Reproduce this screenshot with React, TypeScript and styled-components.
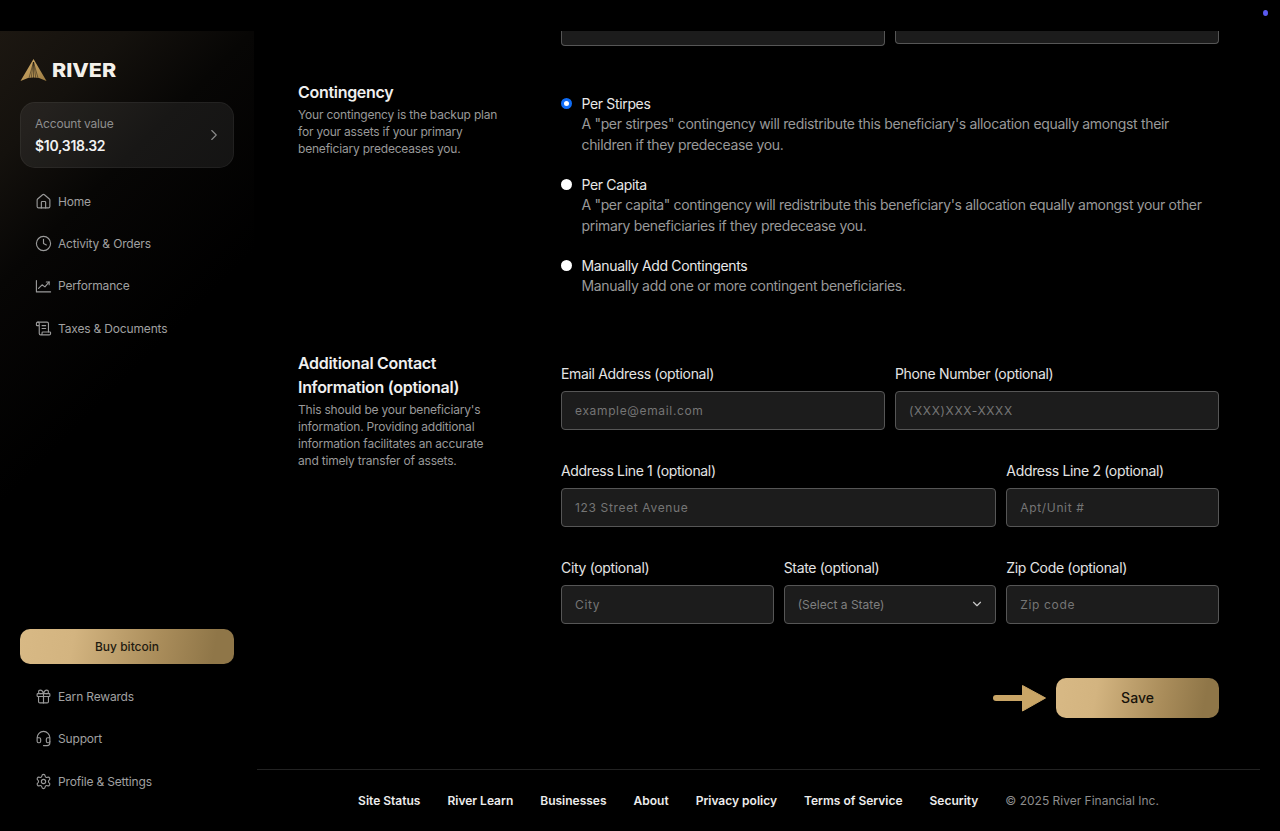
import { createGlobalStyle, styled } from 'styled-components';
import {
  ChevronDown,
  ChevronRight,
  Clock,
  Gift,
  Headset,
  House,
  ScrollText,
  Settings
} from 'lucide-react';

const GlobalStyle = createGlobalStyle`
  html, body {
    margin: 0;
    padding: 0;
    background: #000;
    font-family: Inter, 'Liberation Sans', sans-serif;
    -webkit-font-smoothing: antialiased;
  }
  * { box-sizing: border-box; }
`;

const PerformanceIcon = () => (
  <svg width='17' height='17' viewBox='0 0 24 24' fill='none' stroke='currentColor' strokeWidth='2' strokeLinecap='round' strokeLinejoin='round'>
    <path d='M2 5v16h20' />
    <path d='M5 16l5-5 4 3 6-7' />
    <path d='M16 7h4v4' />
  </svg>
);

const Logo = () => (
  <svg width='27' height='23' viewBox='0 0 27 23' fill='none'>
    <defs>
      <linearGradient id='logoGold' x1='0' y1='0' x2='1' y2='1'>
        <stop offset='0' stopColor='#d6b06c' />
        <stop offset='1' stopColor='#9c7c42' />
      </linearGradient>
    </defs>
    <path d='M13.5 0L26.5 22L19 19Q13.5 18 8 19L0.5 22Z' fill='url(#logoGold)' />
    <path d='M13.5 3V19M13.5 3L11.2 19M13.5 3L15.8 19M13.5 3L9 19M13.5 3L18 19' stroke='#1a1610' strokeWidth='0.5' />
  </svg>
);

const ArrowMark = () => (
  <svg width='53' height='28' viewBox='0 0 53 28' fill='none'>
    <path d='M3 14H30' stroke='#c9a566' strokeWidth='6' strokeLinecap='round' />
    <path d='M29.5 1.5L52.5 14L29.5 27Z' fill='#c9a566' stroke='#c9a566' strokeWidth='1' strokeLinejoin='round' />
  </svg>
);

const topNav = [
  { label: 'Home', icon: <House size={17} /> },
  { label: 'Activity & Orders', icon: <Clock size={17} /> },
  { label: 'Performance', icon: <PerformanceIcon /> },
  { label: 'Taxes & Documents', icon: <ScrollText size={17} /> }
];

const bottomNav = [
  { label: 'Earn Rewards', icon: <Gift size={17} /> },
  { label: 'Support', icon: <Headset size={17} /> },
  { label: 'Profile & Settings', icon: <Settings size={17} /> }
];

const contingencies = [
  {
    title: 'Per Stirpes',
    text: 'A "per stirpes" contingency will redistribute this beneficiary\'s allocation equally amongst their children if they predecease you.',
    checked: true
  },
  {
    title: 'Per Capita',
    text: 'A "per capita" contingency will redistribute this beneficiary\'s allocation equally amongst your other primary beneficiaries if they predecease you.',
    checked: false
  },
  {
    title: 'Manually Add Contingents',
    text: 'Manually add one or more contingent beneficiaries.',
    checked: false
  }
];

const footerLinks = ['Site Status', 'River Learn', 'Businesses', 'About', 'Privacy policy', 'Terms of Service', 'Security'];

const App = () => {
  return (
    <Page>
      <GlobalStyle />
      <StatusDot />
      <Sidebar>
        <Brand>
          <Logo />
          <BrandName>RIVER</BrandName>
        </Brand>
        <AccountCard>
          <div>
            <AccountLabel>Account value</AccountLabel>
            <AccountValue>$10,318.32</AccountValue>
          </div>
          <ChevronRight size={18} color='#8a8a8a' strokeWidth={1.5} />
        </AccountCard>
        <NavList>
          {topNav.map((item) => (
            <NavItem key={item.label}>
              {item.icon}
              {item.label}
            </NavItem>
          ))}
        </NavList>
        <SidebarBottom>
          <BuyButton>Buy bitcoin</BuyButton>
          <BottomNavList>
            {bottomNav.map((item) => (
              <NavItem key={item.label}>
                {item.icon}
                {item.label}
              </NavItem>
            ))}
          </BottomNavList>
        </SidebarBottom>
      </Sidebar>

      <Main>
        <Content>
          <CutOffRow>
            <CutOffField $height={15} />
            <CutOffField $height={13} />
          </CutOffRow>

          <ContingencySection>
            <div>
              <SectionTitle>Contingency</SectionTitle>
              <SectionText>
                Your contingency is the backup plan for your assets if your primary beneficiary predeceases you.
              </SectionText>
            </div>
            <RadioGroup>
              {contingencies.map((option) => (
                <RadioRow key={option.title}>
                  <RadioMark $checked={option.checked} />
                  <div>
                    <RadioTitle>{option.title}</RadioTitle>
                    <RadioText>{option.text}</RadioText>
                  </div>
                </RadioRow>
              ))}
            </RadioGroup>
          </ContingencySection>

          <ContactSection>
            <div>
              <SectionTitle>Additional Contact Information (optional)</SectionTitle>
              <SectionText>
                This should be your beneficiary's information. Providing additional information facilitates an accurate and timely transfer of assets.
              </SectionText>
            </div>
            <FieldGrid>
              <Field $span={3}>
                <FieldLabel>Email Address (optional)</FieldLabel>
                <TextInput placeholder='example@email.com' readOnly />
              </Field>
              <Field $span={3}>
                <FieldLabel>Phone Number (optional)</FieldLabel>
                <TextInput placeholder='(XXX)XXX-XXXX' readOnly />
              </Field>
              <Field $span={4}>
                <FieldLabel>Address Line 1 (optional)</FieldLabel>
                <TextInput placeholder='123 Street Avenue' readOnly />
              </Field>
              <Field $span={2}>
                <FieldLabel>Address Line 2 (optional)</FieldLabel>
                <TextInput placeholder='Apt/Unit #' readOnly />
              </Field>
              <Field $span={2}>
                <FieldLabel>City (optional)</FieldLabel>
                <TextInput placeholder='City' readOnly />
              </Field>
              <Field $span={2}>
                <FieldLabel>State (optional)</FieldLabel>
                <SelectBox>
                  (Select a State)
                  <ChevronDown size={14} color='#c8c8c8' />
                </SelectBox>
              </Field>
              <Field $span={2}>
                <FieldLabel>Zip Code (optional)</FieldLabel>
                <TextInput placeholder='Zip code' readOnly />
              </Field>
            </FieldGrid>
          </ContactSection>

          <SaveRow>
            <ArrowMark />
            <SaveButton>Save</SaveButton>
          </SaveRow>
        </Content>

        <Footer>
          {footerLinks.map((link) => (
            <FooterLink key={link}>{link}</FooterLink>
          ))}
          <Copyright>© 2025 River Financial Inc.</Copyright>
        </Footer>
      </Main>
    </Page>
  );
};

export default App;

const goldGradient = 'linear-gradient(100deg, #d8b985 0%, #d3b480 25%, #a98c5a 65%, #8f7648 90%)';

const Page = styled.div`
  position: relative;
  display: flex;
  height: 831px;
  padding-top: 31px;
  overflow: hidden;
  background: #000;
`;

const StatusDot = styled.span`
  position: absolute;
  top: 10px;
  left: 1263px;
  width: 5px;
  height: 6px;
  border-radius: 50%;
  background: #5a5af0;
`;

const Sidebar = styled.aside`
  display: flex;
  flex-direction: column;
  flex: 0 0 254px;
  padding: 28px 20px 0;
  background: linear-gradient(135deg, #1c1711 0%, #14110d 12%, #070605 24%, #000 45%);
`;

const Brand = styled.div`
  display: flex;
  align-items: center;
  gap: 5px;
  height: 22px;
`;

const BrandName = styled.span`
  font-size: 19px;
  font-weight: 800;
  transform: scaleX(1.13);
  transform-origin: left center;
  color: #f3f0ea;
`;

const AccountCard = styled.div`
  display: flex;
  align-items: center;
  justify-content: space-between;
  height: 66px;
  margin-top: 21px;
  padding: 0 10px 0 14px;
  border: 1px solid rgba(255, 255, 255, 0.05);
  border-radius: 15px;
  background: rgba(255, 255, 255, 0.07);
`;

const AccountLabel = styled.div`
  font-size: 12px;
  line-height: 18px;
  letter-spacing: -0.2px;
  color: #8e8e8e;
`;

const AccountValue = styled.div`
  margin-top: 3px;
  font-size: 14px;
  line-height: 20px;
  font-weight: 600;
  letter-spacing: -0.3px;
  color: #f2f2f2;
`;

const NavList = styled.nav`
  display: flex;
  flex-direction: column;
  gap: 22.4px;
  margin-top: 23px;
  padding-left: 14.5px;
`;

const BottomNavList = styled(NavList)`
  margin-top: 22px;
`;

const NavItem = styled.a`
  display: flex;
  align-items: center;
  gap: 6.5px;
  height: 20px;
  font-size: 12px;
  letter-spacing: -0.17px;
  color: #a0a0a0;

  svg {
    flex: none;
    color: #9a9a9a;
    stroke-width: 1.6;
  }
`;

const SidebarBottom = styled.div`
  margin-top: auto;
  padding-bottom: 40px;
`;

const BuyButton = styled.button`
  display: block;
  width: 100%;
  height: 35px;
  border: 0;
  border-radius: 10px;
  background: ${goldGradient};
  font-family: inherit;
  font-size: 12px;
  font-weight: 500;
  color: #221b10;
`;

const Main = styled.main`
  display: flex;
  flex-direction: column;
  flex: 1;
  min-width: 0;
`;

const Content = styled.div`
  flex: 1;
  padding-left: 44px;
`;

const CutOffRow = styled.div`
  display: flex;
  align-items: flex-start;
  gap: 10px;
  width: 921px;
  padding-left: 263px;
`;

const CutOffField = styled.div<{ $height: number }>`
  flex: 1;
  height: ${(p) => p.$height}px;
  border: 1px solid #565656;
  border-top: 0;
  border-radius: 0 0 4px 4px;
  background: #1c1c1c;
`;

const ContingencySection = styled.section`
  display: grid;
  grid-template-columns: 263px 658px;
  margin-top: 34px;
`;

const ContactSection = styled(ContingencySection)`
  margin-top: 54px;
`;

const SectionTitle = styled.h2`
  width: 200px;
  margin: 0;
  font-size: 16px;
  line-height: 24px;
  font-weight: 600;
  letter-spacing: -0.3px;
  color: #efefef;
`;

const SectionText = styled.p`
  width: 205px;
  margin: 2px 0 0;
  font-size: 12px;
  line-height: 17px;
  letter-spacing: -0.2px;
  color: #999;
`;

const RadioGroup = styled.div`
  display: flex;
  flex-direction: column;
  gap: 19px;
  padding-top: 13px;
`;

const RadioRow = styled.label`
  display: flex;
  gap: 9.5px;
`;

const RadioMark = styled.span<{ $checked: boolean }>`
  flex: none;
  width: 11px;
  height: 11px;
  margin-top: 5px;
  border-radius: 50%;
  background: #fff;
  border: ${(p) => (p.$checked ? '3px solid #0f6cf5' : '0')};
`;

const RadioTitle = styled.div`
  font-size: 14px;
  line-height: 21px;
  letter-spacing: -0.35px;
  color: #e8e8e8;
`;

const RadioText = styled.div`
  font-size: 14px;
  line-height: 20.5px;
  letter-spacing: -0.33px;
  color: #999;
`;

const FieldGrid = styled.div`
  display: grid;
  grid-template-columns: repeat(6, 1fr);
  column-gap: 10px;
  row-gap: 31px;
  padding-top: 13px;
`;

const Field = styled.div<{ $span: number }>`
  display: flex;
  flex-direction: column;
  gap: 7px;
  grid-column: span ${(p) => p.$span};
`;

const FieldLabel = styled.label`
  font-size: 14px;
  line-height: 20px;
  letter-spacing: -0.33px;
  color: #e4e4e4;
`;

const TextInput = styled.input`
  width: 100%;
  height: 39px;
  padding: 0 13px;
  border: 1px solid #565656;
  border-radius: 4px;
  outline: none;
  background: #1c1c1c;
  font-family: inherit;
  font-size: 12px;
  letter-spacing: 0.65px;
  color: #e4e4e4;

  &::placeholder {
    color: #757575;
    opacity: 1;
  }
`;

const SelectBox = styled.div`
  display: flex;
  align-items: center;
  justify-content: space-between;
  height: 39px;
  padding: 0 11px 0 13px;
  border: 1px solid #565656;
  border-radius: 4px;
  background: #1c1c1c;
  font-size: 12px;
  color: #7f7f7f;
`;

const SaveRow = styled.div`
  display: flex;
  align-items: center;
  justify-content: flex-end;
  gap: 10px;
  width: 921px;
  margin-top: 54px;
`;

const SaveButton = styled.button`
  width: 163px;
  height: 40px;
  border: 0;
  border-radius: 10px;
  background: ${goldGradient};
  font-family: inherit;
  font-size: 14px;
  font-weight: 500;
  color: #17120a;
`;

const Footer = styled.footer`
  display: flex;
  align-items: center;
  justify-content: center;
  gap: 27px;
  height: 62px;
  margin: 0 20px 0 3px;
  border-top: 1px solid #222;
`;

const FooterLink = styled.a`
  font-size: 12px;
  font-weight: 600;
  color: #ececec;
`;

const Copyright = styled.span`
  font-size: 12px;
  color: #8c8c8c;
`;
